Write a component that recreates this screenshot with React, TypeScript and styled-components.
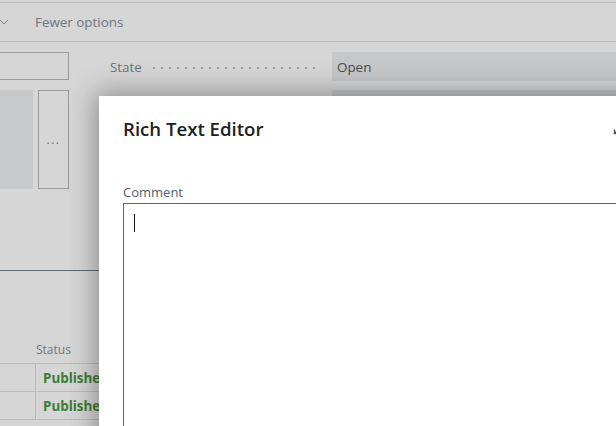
import styled, { createGlobalStyle } from "styled-components";

const GlobalStyle = createGlobalStyle`
  html, body {
    margin: 0;
    padding: 0;
    background: #ffffff;
    overflow: hidden;
  }
  body {
    font-family: "Open Sans", "Liberation Sans", sans-serif;
    color: #212121;
  }
`;

const Page = styled.div`
  position: relative;
  width: 616px;
  height: 426px;
  overflow: hidden;
  background: #ffffff;
`;

const Toolbar = styled.div`
  margin-top: 2px;
  height: 38px;
  border-top: 1px solid #e3e3e3;
  border-bottom: 1px solid #e3e3e3;
  display: flex;
  align-items: center;
  gap: 26px;
  font-size: 13.4px;
  color: #848d98;
`;

const Chevron = styled.svg`
  margin-left: -1px;
  width: 10px;
  height: 10px;
  stroke: #9aa1a8;
  fill: none;
`;

const Body = styled.div`
  display: grid;
  grid-template-columns: 69px 1fr;
  column-gap: 41px;
  padding-top: 10px;
`;

const LeftCol = styled.div`
  display: flex;
  flex-direction: column;
  gap: 10px;
`;

const SearchBox = styled.div`
  height: 28px;
  box-sizing: border-box;
  border: 1px solid #b8b8b8;
  border-left: none;
`;

const MediaRow = styled.div`
  display: flex;
  gap: 5px;
  height: 99px;
`;

const Picture = styled.div`
  width: 33px;
  background: #eff0f1;
`;

const MoreButton = styled.div`
  flex: 1;
  box-sizing: border-box;
  border: 1px solid #b8b8b8;
  display: flex;
  align-items: center;
  justify-content: center;
  font-size: 12px;
  letter-spacing: 1.5px;
  color: #7a8591;
`;

const RightCol = styled.div`
  display: flex;
  flex-direction: column;
  gap: 9px;
`;

const FieldRow = styled.div`
  display: grid;
  grid-template-columns: 222px 1fr;
  height: 29px;
`;

const FieldLabel = styled.div`
  display: flex;
  align-items: center;
  gap: 8px;
  font-size: 13.4px;
  color: #7e8994;
  padding-right: 12px;
`;

const Leader = styled.span`
  flex: 1;
  height: 2px;
  margin-top: 2px;
  background-image: radial-gradient(circle, #b4b9bf 0.8px, transparent 1px);
  background-size: 8px 2px;
  background-repeat: repeat-x;
`;

const FieldValue = styled.div`
  background: #eceef0;
  display: flex;
  align-items: center;
  padding-left: 5px;
  font-size: 13.4px;
  color: #5c5c5c;
`;

const Divider = styled.div`
  margin-top: 81px;
  height: 1px;
  background: #768089;
`;

const Table = styled.div`
  margin-top: 65px;
  display: grid;
  grid-template-columns: 36px 1fr;
`;

const HeadCell = styled.div`
  height: 27px;
  border-bottom: 1px solid #e0e0e0;
  display: flex;
  align-items: center;
  font-size: 12px;
  color: #858f99;
`;

const Cell = styled.div<{ $first?: boolean }>`
  height: 27px;
  border-bottom: 1px solid #e0e0e0;
  border-right: ${(p) => (p.$first ? "1px solid #e0e0e0" : "none")};
  display: flex;
  align-items: center;
  padding-left: 7px;
  font-size: 13.4px;
  font-weight: 700;
  color: #4a9640;
`;

const Backdrop = styled.div`
  position: absolute;
  inset: 0;
  background: rgba(0, 0, 0, 0.16);
`;

const Dialog = styled.div`
  position: absolute;
  left: 99px;
  top: 96px;
  width: 552px;
  height: 420px;
  background: #ffffff;
  box-shadow: 0 0 26px 3px rgba(0, 0, 0, 0.36);
  padding: 20px 24px 0;
  box-sizing: border-box;
`;

const DialogHeader = styled.div`
  display: flex;
  align-items: center;
  justify-content: space-between;
  height: 24px;
`;

const Title = styled.h1`
  margin: 0;
  font-size: 18.6px;
  font-weight: 600;
  color: #212121;
`;

const IconButton = styled.svg`
  width: 14px;
  height: 14px;
  fill: none;
  stroke: #505050;
  stroke-width: 1.4;
`;

const FieldCaption = styled.div`
  margin-top: 42px;
  font-size: 13px;
  line-height: 20px;
  color: #505c6d;
`;

const Editor = styled.div`
  margin-top: 1px;
  height: 260px;
  border: 1px solid #078a8a;
  padding: 10px 10px;
`;

const Caret = styled.span`
  display: block;
  width: 1px;
  height: 18px;
  background: #111111;
`;

export default function App() {
  return (
    <Page>
      <GlobalStyle />
      <Toolbar>
        <Chevron viewBox="0 0 10 10">
          <path d="M1 3 L5 7 L9 3" />
        </Chevron>
        <span>Fewer options</span>
      </Toolbar>
      <Body>
        <LeftCol>
          <SearchBox />
          <MediaRow>
            <Picture />
            <MoreButton>...</MoreButton>
          </MediaRow>
        </LeftCol>
        <RightCol>
          <FieldRow>
            <FieldLabel>
              State
              <Leader />
            </FieldLabel>
            <FieldValue>Open</FieldValue>
          </FieldRow>
          <FieldRow>
            <FieldLabel />
            <FieldValue />
          </FieldRow>
        </RightCol>
      </Body>
      <Divider />
      <Table>
        <HeadCell />
        <HeadCell>Status</HeadCell>
        <Cell $first />
        <Cell>Published</Cell>
        <Cell $first />
        <Cell>Published</Cell>
      </Table>
      <Backdrop />
      <Dialog>
        <DialogHeader>
          <Title>Rich Text Editor</Title>
          <IconButton viewBox="0 0 14 14">
            <path d="M8.5 1.5 H12.5 V5.5 M12.5 1.5 L8 6 M5.5 12.5 H1.5 V8.5 M1.5 12.5 L6 8" />
          </IconButton>
        </DialogHeader>
        <FieldCaption>Comment</FieldCaption>
        <Editor>
          <Caret />
        </Editor>
      </Dialog>
    </Page>
  );
}
